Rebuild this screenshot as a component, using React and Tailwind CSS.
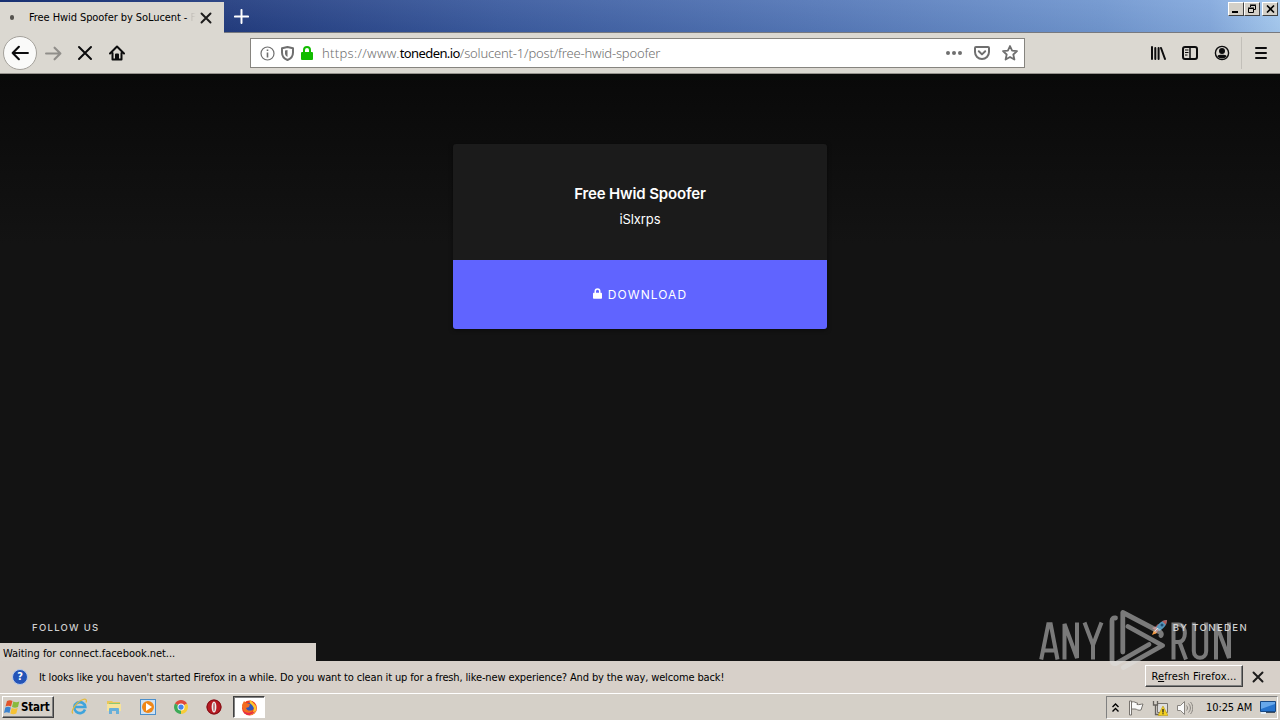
const Stroke = ({ children, className = 'h-4 w-4', width = 2 }) => (
  <svg
    className={className}
    viewBox="0 0 16 16"
    fill="none"
    stroke="currentColor"
    strokeWidth={width}
    strokeLinecap="round"
    strokeLinejoin="round"
  >
    {children}
  </svg>
);

const CloseIcon = ({ className, width = 2 }) => (
  <Stroke className={className} width={width}>
    <path d="M2 2l12 12M14 2L2 14" />
  </Stroke>
);

const LockIcon = ({ className }) => (
  <svg className={className} viewBox="0 0 12 14" fill="none">
    <path d="M3 7V4a3 3 0 0 1 6 0v3" stroke="currentColor" strokeWidth="2" />
    <rect x="0" y="6" width="12" height="8" rx="1" fill="currentColor" />
  </svg>
);

const WindowButton = ({ children, className = '' }) => (
  <div
    className={`flex h-[14px] w-4 items-center justify-center border border-t-white border-l-white border-r-[#404040] border-b-[#404040] bg-[#d4d0c8] ${className}`}
  >
    {children}
  </div>
);

const TitleBar = () => (
  <div className="flex h-[33px] shrink-0 border-b border-[#77797f] bg-[linear-gradient(to_bottom,rgba(255,255,255,0.06),rgba(0,0,0,0.03)),linear-gradient(to_right,#0a246a_0px,#233d80_230px,#3b5b9f_500px,#5578b8_820px,#7096cf_1100px,#84a9dd_1210px,#a6caf0_1280px)]">
    <div className="mt-[2px] flex h-[31px] w-[224px] items-center bg-[#dbd8d1] pr-[12px] pl-[10px]">
      <div className="h-[5px] w-[5px] rounded-full bg-[#55534f]"></div>
      <div className="mt-px ml-[15px] w-[166px] text-[11px] whitespace-nowrap text-black">
        <span className="tracking-[-0.08px]">Free Hwid Spoofer by SoLucent -</span>
        <span className="bg-gradient-to-r from-[#a5a29d] to-[#dbd8d1] bg-clip-text text-transparent"> F</span>
      </div>
      <CloseIcon className="ml-[5px] h-[12px] w-[12px] shrink-0 text-[#1c1b1b]" width={2.6} />
    </div>
    <div className="flex w-[34px] items-center justify-center text-white">
      <Stroke className="h-[15px] w-[15px]" width={2.1}>
        <path d="M8 1v14M1 8h14" />
      </Stroke>
    </div>
    <div className="ml-auto flex pt-[2px] pr-[2px]">
      <WindowButton>
        <div className="mt-[6px] mr-[2px] h-[2px] w-[6px] bg-black"></div>
      </WindowButton>
      <WindowButton>
        <svg className="h-[10px] w-[10px]" viewBox="0 0 10 10" fill="none" stroke="#000">
          <path d="M3.5 3V1.5h5v4H7M3 1h6" />
          <path d="M1.5 4.5h5v4h-5zM1 4h6" />
        </svg>
      </WindowButton>
      <WindowButton className="ml-[2px]">
        <svg className="h-[8px] w-[9px]" viewBox="0 0 9 8" stroke="#000" strokeWidth="1.6">
          <path d="M1 .5l7 7M8 .5l-7 7" />
        </svg>
      </WindowButton>
    </div>
  </div>
);

const UrlBar = () => (
  <div className="ml-[116px] flex h-[30px] w-[775px] items-center border border-[#86847f] bg-white pr-[6px] pl-[9px] text-[#6f6f6f]">
    <svg className="h-[15px] w-[15px]" viewBox="0 0 15 15" fill="none" stroke="currentColor">
      <circle cx="7.5" cy="7.5" r="6.5" strokeWidth="1.2" />
      <path d="M7.5 6.5v5M7.5 3.5v1.6" strokeWidth="1.6" />
    </svg>
    <svg className="ml-[6px] h-[15px] w-[13px]" viewBox="0 0 13 15" fill="none" stroke="currentColor">
      <path d="M6.500 1L12 2.200V6.500C12 10.500 9.500 12.800 6.500 14C3.500 12.800 1 10.500 1 6.500V2.200z" strokeWidth="2" strokeLinejoin="round" />
      <path d="M6.500 4L4 4.500V7.500C4 9 5 10.300 6.500 11z" fill="currentColor" stroke="none" />
    </svg>
    <LockIcon className="ml-[7px] h-[14px] w-3 text-[#12bc00]" />
    <div className="mt-px ml-[9px] font-['Noto_Sans','Open_Sans',sans-serif] text-[13px] font-light whitespace-nowrap text-[#707070]">
      <span className="tracking-[0.3px]">https://www.</span>
      <span className="font-normal tracking-[-0.58px] text-black">toneden.io</span>
      <span className="tracking-[-0.18px]">/solucent-1/post/free-hwid-spoofer</span>
    </div>
    <div className="ml-auto flex items-center gap-[12px]">
      <svg className="h-4 w-4" viewBox="0 0 16 16" fill="currentColor">
        <circle cx="2" cy="8" r="2" />
        <circle cx="8" cy="8" r="2" />
        <circle cx="14" cy="8" r="2" />
      </svg>
      <Stroke>
        <path d="M2 2h12a1 1 0 0 1 1 1v4a7 7 0 0 1-14 0V3a1 1 0 0 1 1-1z" />
        <path d="M4.800 6.300L8 9.400l3.200-3.100" />
      </Stroke>
      <Stroke width={1.8}>
        <path d="M8 1l2.100 4.600 4.900.5-3.700 3.400 1.100 5L8 12l-4.400 2.500 1.100-5L1 6.100l4.900-.5z" />
      </Stroke>
    </div>
  </div>
);

const Toolbar = () => (
  <div className="flex h-[41px] shrink-0 items-center border-b border-[#95928d] bg-[#dbd8d1] pl-[3px] text-[#0c0c0d]">
    <div className="flex h-[34px] w-[34px] items-center justify-center rounded-full border border-[#a4a19b] bg-[#fafaf9]">
      <Stroke className="h-[18px] w-[18px]" width={1.9}>
        <path d="M15 8H1.500M7 2.500L1.500 8 7 13.500" />
      </Stroke>
    </div>
    <Stroke className="ml-2 h-[17px] w-[17px] text-[#908e8a]">
      <path d="M1 8h13.500M9 2.500L14.500 8 9 13.500" />
    </Stroke>
    <CloseIcon className="ml-[15px] h-4 w-4" width={2} />
    <Stroke className="ml-4 h-4 w-4">
      <path d="M1 8.500L8 1.500l7 7M3.500 8v6.500h9V8" />
      <path d="M7 14V9.500h2V14" />
    </Stroke>
    <div className="w-[9px]"></div>
    <UrlBar />
    <div className="ml-auto flex h-full items-center">
      <svg className="h-4 w-4" viewBox="0 0 16 16" stroke="currentColor" strokeWidth="2" strokeLinecap="round">
        <path d="M2 2v12M5.300 3v11M8.600 3v11M11 3l4 11" />
      </svg>
      <svg className="ml-4 h-4 w-4" viewBox="0 0 16 16" fill="none" stroke="currentColor">
        <rect x="1" y="2" width="14" height="12" rx="2" strokeWidth="2" />
        <path d="M8 2v12" strokeWidth="1.500" />
        <path d="M3 5h3.500M3 7.500h3.500M3 10h2.500" />
      </svg>
      <svg className="ml-4 h-4 w-4" viewBox="0 0 16 16" fill="none" stroke="currentColor">
        <circle cx="8" cy="8" r="6.600" strokeWidth="1.400" />
        <circle cx="8" cy="6" r="3" fill="currentColor" stroke="none" />
        <path d="M3.300 11.200C4.500 9.700 6 9.800 8 9.800s3.500-.1 4.700 1.400C11.500 13 9.700 13.400 8 13.400s-3.500-.4-4.700-2.200z" fill="currentColor" stroke="none" />
      </svg>
      <div className="ml-[11px] h-8 w-px bg-[#c2bfb9]"></div>
      <Stroke className="mr-[11px] ml-[11px] h-4 w-4">
        <path d="M3 3h10M3 8h10M3 13h10" />
      </Stroke>
    </div>
  </div>
);

const Watermark = () => (
  <svg
    className="absolute top-[534px] left-[1036px] z-10 h-[66px] w-[200px] opacity-50"
    viewBox="1036 608 200 66"
    fill="none"
    stroke="#e0e0e0"
    strokeWidth="4"
    strokeLinejoin="miter"
  >
    <path d="M1041.200 659.500L1048.300 624.200h2.400L1057.500 659.500M1043.500 650.500h11.500" />
    <path d="M1064.500 659.500V624L1077 658V622.500" strokeLinejoin="bevel" />
    <path d="M1084.500 622.500L1093 645L1101.500 622.500M1093 643v16.500" />
    <path d="M1173.500 659.500V624.600h5c8.500 0 8.500 17.500 0 17.500h-5M1179.500 642l6.500 17.500" />
    <path d="M1193.800 622.500v28.500c0 9 12.400 9 12.400 0v-28.500" />
    <path d="M1216 659.500V624L1229 658V622.500" strokeLinejoin="bevel" />
    <g strokeWidth="4.800" strokeLinecap="round" strokeLinejoin="round">
      <path d="M1115.500 618q-3.500-.5-3.500 3v39q0 4 4 3.500L1149 644.500" />
      <path d="M1161 635.500q1-2-1-3.500L1122.800 612.500V652" />
      <path d="M1128 626.500L1162.500 645.500L1123.500 667.500" />
    </g>
  </svg>
);

const Rocket = () => (
  <svg className="h-[17px] w-[17px]" viewBox="0 0 17 17">
    <path d="M4 8l3-3 4 1-4 6-3 3v-4L1 9z" fill="#a94b4c" />
    <path d="M16 1c-5 0-9 4-11 8l3 3c4-2 8-6 8-11z" fill="#5596bb" />
    <path d="M16 1l-5 1 4 4z" fill="#b45a59" />
    <circle cx="11" cy="6" r="1.500" fill="#224e75" />
    <path d="M1 16l2-5 3 3z" fill="#f49b42" />
    <path d="M4 12l3-3" stroke="#dbe2e5" />
  </svg>
);

const Page = () => (
  <div className="relative h-[587px] shrink-0 bg-[linear-gradient(to_bottom,#090909,#131313_170px)] font-[Inter,sans-serif] text-white">
    <div className="flex justify-center pt-[70px]">
      <div className="w-[374px] overflow-hidden rounded-[3px] bg-[#1b1b1b] shadow-[0_1px_4px_rgba(0,0,0,0.5)]">
        <div className="flex h-[116px] flex-col items-center pt-[40px]">
          <h1 className="text-[15px] leading-5 font-semibold tracking-[-0.16px]">Free Hwid Spoofer</h1>
          <p className="mt-[5px] text-[13px] leading-5 tracking-[-0.1px]">iSlxrps</p>
        </div>
        <div className="flex h-[69px] items-center justify-center bg-[#6064ff]">
          <LockIcon className="mr-[6px] mb-[2px] h-[11px] w-[9px]" />
          <span className="text-[12px] tracking-[1.05px]">DOWNLOAD</span>
        </div>
      </div>
    </div>
    <div className="absolute top-[545px] right-[32px] left-[32px] flex items-center justify-between text-[9.5px] leading-[17px] font-medium text-[#cfcfcf]">
      <span className="tracking-[1.3px]">FOLLOW US</span>
      <span className="flex items-center gap-[5px] tracking-[1.4px]">
        <Rocket />
        BY TONEDEN
      </span>
    </div>
    <div className="absolute bottom-0 left-0 h-[18px] w-[316px] bg-[#d7d1ca] pt-px pl-[3px] font-['DejaVu_Sans_Condensed','Noto_Sans',sans-serif] text-[11px] leading-[19px] text-black">
      <span className="tracking-[-0.04px]">Waiting for connect.facebook.net...</span>
    </div>
    <Watermark />
  </div>
);

const NotificationBar = () => (
  <div className="flex h-[32px] shrink-0 items-center bg-[#d7d0c9] pr-[16px] pl-[12px] text-[11px] text-black">
    <div className="flex h-[16px] w-[16px] items-center justify-center rounded-full border border-[#b9cbe9] bg-[#2454b8] text-[11px] font-bold text-white">
      ?
    </div>
    <span className="mt-[2px] ml-[11px] tracking-[-0.137px] whitespace-nowrap">
      It looks like you haven't started Firefox in a while. Do you want to clean it up for a fresh, like-new experience? And by the way, welcome back!
    </span>
    <button className="mb-[2px] ml-auto h-[22px] w-[98px] border border-t-white border-l-white border-r-[#404040] border-b-[#404040] pt-[2px] tracking-[0.15px] whitespace-nowrap shadow-[inset_-1px_-1px_0_#808080]">
      R<span className="underline">e</span>fresh Firefox...
    </button>
    <CloseIcon className="ml-[9px] h-[12px] w-[12px] text-[#1c1b1b]" width={2.6} />
  </div>
);

const WindowsFlag = () => (
  <svg className="h-[16px] w-[17px]" viewBox="0 0 17 16">
    <path d="M3 2c2-1 4-1 5.500 0L7 7.500c-2-1-3.500-1-5.500 0z" fill="#e2542a" />
    <path d="M9.300 2.500c2 1 4 1 6 0L14 8c-2 1-4 1-6 0z" fill="#88ba3c" />
    <path d="M1.300 8.500c2-1 3.500-1 5.500 0L5.500 14c-2-1-3.500-1-5.500 0z" fill="#3c83cf" />
    <path d="M7.700 9c2 1 4 1 6 0l-1.400 5.500c-2 1-4 1-6 0z" fill="#f6c233" />
  </svg>
);

const InternetExplorer = () => (
  <svg className="h-[17px] w-[17px]" viewBox="0 0 17 17" fill="none">
    <path d="M14 11.500A5.500 5.500 0 1 1 14.300 9H4.500" stroke="#3fa4dc" strokeWidth="2.600" />
    <path d="M2 15.500C-1 13 6 3.500 12 1.500c3-1 4 .5 3 3" stroke="#e3b93c" strokeWidth="1.300" />
  </svg>
);

const Explorer = () => (
  <svg className="h-4 w-4" viewBox="0 0 16 16">
    <path d="M1 2h5l1 1h7v9H1z" fill="#e9c75a" />
    <path d="M3 4h11v4H3z" fill="#8cc873" />
    <path d="M1 5h14v7H1z" fill="#f7e39a" />
    <path d="M3 15V10q0-1 1-1h8q1 0 1 1v5h-3v-3H6v3z" fill="#67afd9" />
  </svg>
);

const MediaPlayer = () => (
  <svg className="h-4 w-4" viewBox="0 0 16 16">
    <rect x=".5" y=".5" width="15" height="15" fill="#cfe2f3" stroke="#4b8fcb" />
    <circle cx="8" cy="8" r="6" fill="#f08717" />
    <path d="M6 4l6 4-6 4z" fill="#fff" />
  </svg>
);

const Chrome = () => (
  <svg className="h-[14px] w-[14px]" viewBox="0 0 16 16">
    <path d="M8 8L1.100 4A8 8 0 0 1 14.900 4z" fill="#df4a3c" />
    <path d="M8 8l6.900-4A8 8 0 0 1 8 16z" fill="#f7cc38" />
    <path d="M8 8v8A8 8 0 0 1 1.100 4z" fill="#3daa57" />
    <circle cx="8" cy="8" r="4" fill="#fff" />
    <circle cx="8" cy="8" r="3" fill="#4484ec" />
  </svg>
);

const Opera = () => (
  <svg className="h-4 w-4" viewBox="0 0 16 16">
    <circle cx="8" cy="8" r="7.500" fill="#b81a22" />
    <circle cx="8" cy="8" r="7" fill="none" stroke="#7c1117" />
    <ellipse cx="8" cy="8" rx="2.400" ry="5.500" fill="#eee" />
    <ellipse cx="8" cy="8" rx=".5" ry="4.200" fill="#8e151b" />
  </svg>
);

const Firefox = () => (
  <svg className="h-[17px] w-[17px]" viewBox="0 0 17 17">
    <circle cx="8.500" cy="9" r="7.500" fill="#f0401f" />
    <path d="M9 1c1 3 6 3 6.500 8 0 4-3 7-7 7C13 14 14 9 11 6z" fill="#ffc52e" />
    <circle cx="8.600" cy="8" r="4.300" fill="#3157b9" />
    <path d="M1 6l2-4 2 2 4 1-1 3-3 1c1 3 4 3 7 2-2 4-9 4-10-1z" fill="#f36d21" />
    <path d="M9 1c-1 2 0 4 2 5l2 3c1-3-1-6-4-8z" fill="#ffc52e" />
    <path d="M2 12c2 5 10 5 12 0-2 2-8 3-12 0z" fill="#e52b50" />
  </svg>
);

const Tray = () => (
  <div className="mt-[2px] ml-auto flex h-[23px] w-[172px] items-center border border-t-[#808080] border-l-[#808080] border-r-white border-b-white pl-[5px]">
    <svg className="h-[10px] w-[7px]" viewBox="0 0 7 10" fill="none" stroke="#000" strokeWidth="1.400">
      <path d="M.5 4l3-3 3 3M.5 8.500l3-3 3 3" />
    </svg>
    <svg className="ml-[9px] h-4 w-4" viewBox="0 0 16 16" fill="#fafafa" stroke="#77736e">
      <path d="M3.500 2c3-1 4 1 6 1l-.5 1.500c2 .5 4-.5 6-.5l-2 6c-3 1-4-1-6-1H3.500zM1.500 1h2v14h-2z" />
    </svg>
    <svg className="ml-2 h-4 w-4" viewBox="0 0 16 16" fill="none">
      <path d="M5.500 3.500h10v9h-10z" fill="#dedede" stroke="#77736e" />
      <path d="M1.500 1v4h4V1M3.500 5v9.500H9" stroke="#65615c" strokeWidth="1.300" />
      <path d="M11 6l5 9.500H6z" fill="#f4d020" stroke="#b89b18" strokeWidth=".6" />
      <path d="M11 9v3.500M11 13.300v1" stroke="#222" strokeWidth="1.300" />
    </svg>
    <svg className="ml-2 h-4 w-[17px]" viewBox="0 0 17 16" fill="none" stroke="#87837e">
      <path d="M1.500 5.500h3l4-4v13l-4-4h-3z" fill="#fafafa" />
      <path d="M10.500 5.500c1.300 1.500 1.300 3.500 0 5M12.500 3.500c2.500 2.700 2.500 6.300 0 9M14.500 2c3 3.500 3 8.500 0 12" />
    </svg>
    <span className="mt-px ml-[13px] w-[49px] text-[11px] tracking-[-0.1px] whitespace-nowrap">10:25 AM</span>
    <svg className="ml-[5px] h-[13px] w-[16px]" viewBox="0 0 16 13">
      <path d="M.5.500h15v10H.5z" fill="#2774cd" stroke="#174985" />
      <path d="M1 1h14v2L1 8z" fill="#67a8eb" />
      <path d="M1 11h5v2H1z" fill="#e5eef6" />
      <path d="M6 11h9v1H6z" fill="#405061" />
    </svg>
  </div>
);

const Taskbar = () => (
  <div className="flex h-[27px] shrink-0 items-start border-t border-[#fff] bg-[#d5d0c8] text-black">
    <div className="mt-[2px] ml-[2px] flex h-[22px] w-[52px] items-center border border-t-white border-l-white border-r-[#404040] border-b-[#404040] pl-px shadow-[inset_-1px_-1px_0_#808080]">
      <WindowsFlag />
      <span className="mt-px text-[11.5px] font-bold tracking-[-0.2px]">Start</span>
    </div>
    <div className="mt-[4px] ml-[17px] flex items-center gap-[18px]">
      <InternetExplorer />
      <Explorer />
      <MediaPlayer />
      <Chrome />
      <Opera />
    </div>
    <div className="mt-[2px] ml-[11px] flex h-[22px] w-8 items-center justify-center border border-t-[#404040] border-l-[#404040] border-r-white border-b-white bg-white shadow-[inset_1px_1px_0_#808080]">
      <Firefox />
    </div>
    <Tray />
    <div className="w-[2px]"></div>
  </div>
);

const App = () => (
  <div className="flex h-[720px] w-[1280px] flex-col overflow-hidden bg-[#d5d0c8] font-['DejaVu_Sans_Condensed','Noto_Sans',sans-serif]">
    <TitleBar />
    <Toolbar />
    <Page />
    <NotificationBar />
    <Taskbar />
  </div>
);

export default App;
